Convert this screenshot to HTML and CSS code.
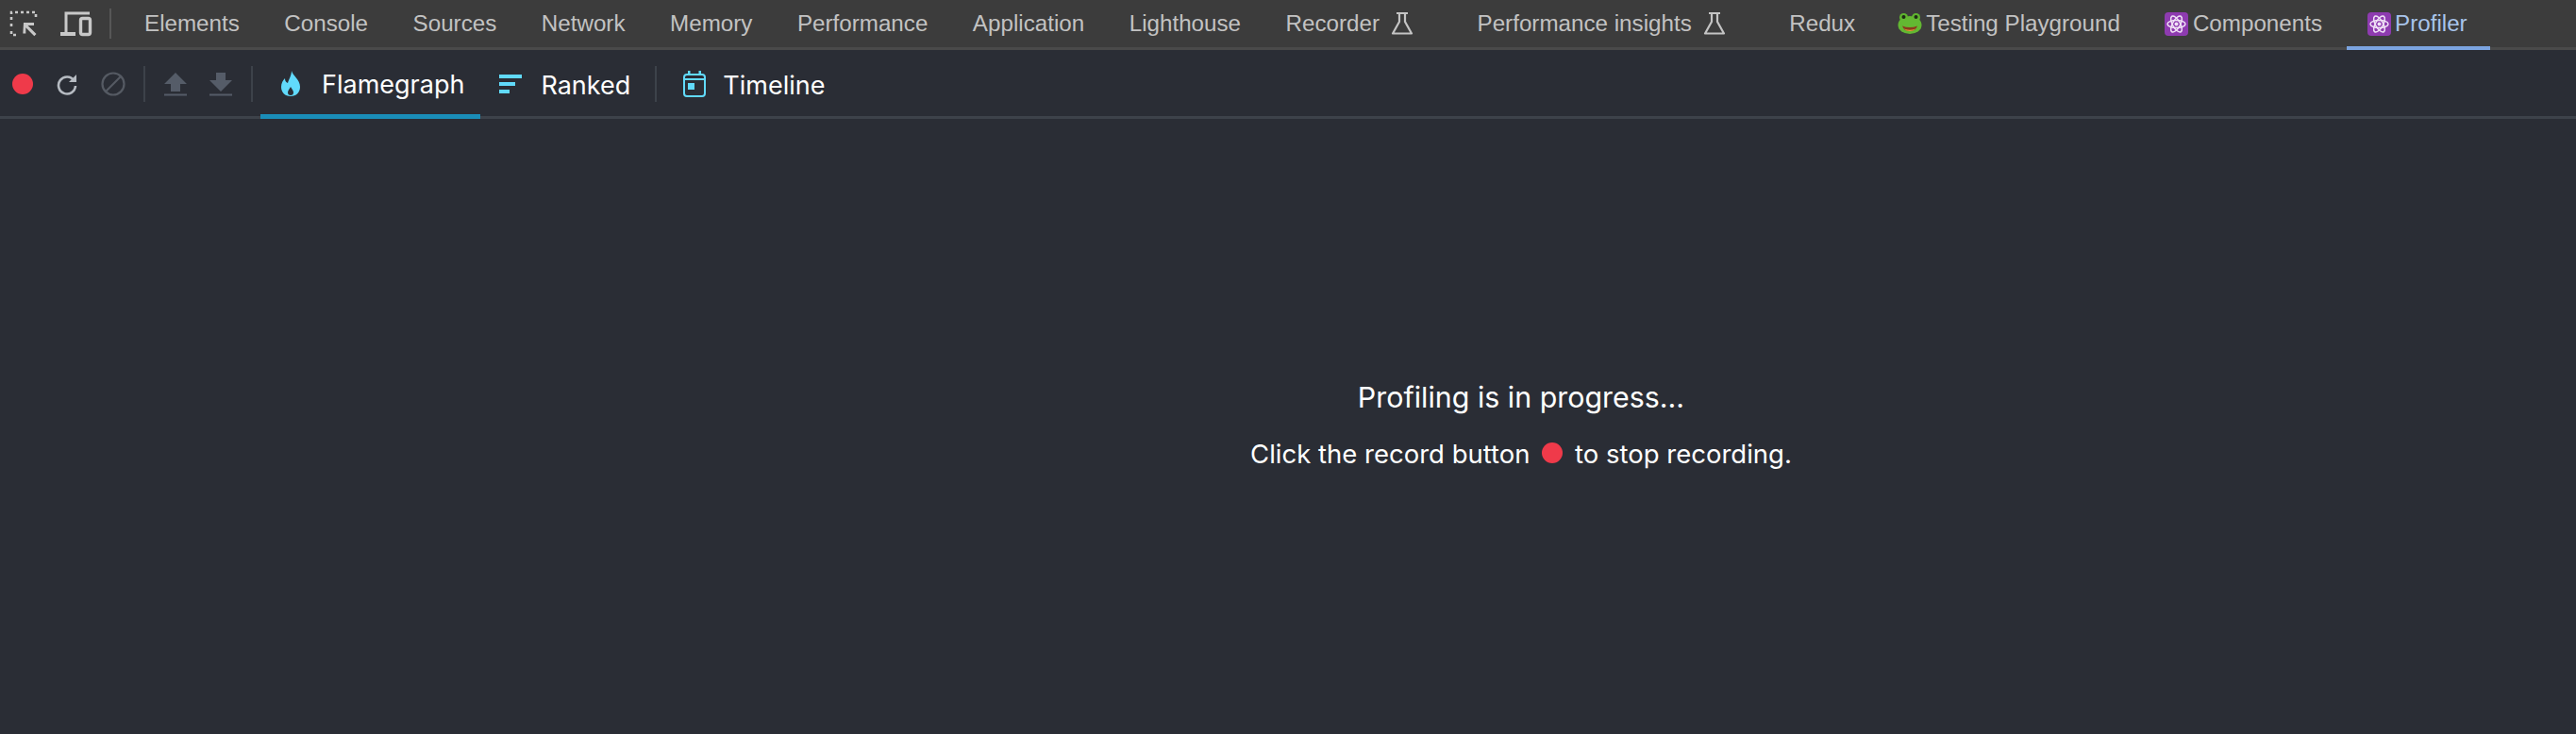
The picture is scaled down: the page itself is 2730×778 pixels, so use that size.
FILE: index.html
```html
<!DOCTYPE html>
<html lang="en">
<head>
    <meta charset="UTF-8">
    <meta name="viewport" content="width=device-width, initial-scale=1.0">
    <title>DevTools - Profiler</title>
    <link rel="stylesheet" href="styles.css">
</head>
<body>

<!-- DevTools main tabs -->
<div class="tabbar">
    <div class="tool-icons">
        <svg class="tool-icon" width="30" height="30" viewBox="0 0 30 30">
            <path d="M2 11V3h26v8M2 15v4M2 23v4h8M14 3h0" fill="none" stroke="#c8c8c8" stroke-width="2.6" stroke-dasharray="3 3"/>
            <path d="M15 14h11v3h-6.500l9 9-2.200 2.200-9-9V25.500h-3z" fill="#c8c8c8"/>
        </svg>
        <svg class="tool-icon" width="34" height="28" viewBox="0 0 34 28">
            <path d="M6 24V3h25" fill="none" stroke="#c8c8c8" stroke-width="3"/>
            <rect x="0" y="23" width="16" height="4" fill="#c8c8c8"/>
            <rect x="21.500" y="8.500" width="10" height="17" rx="2" fill="none" stroke="#c8c8c8" stroke-width="3.400"/>
        </svg>
    </div>
    <div class="tab-sep"></div>
    <div class="tabs">
        <div class="tab">Elements</div>
        <div class="tab">Console</div>
        <div class="tab">Sources</div>
        <div class="tab">Network</div>
        <div class="tab">Memory</div>
        <div class="tab">Performance</div>
        <div class="tab">Application</div>
        <div class="tab">Lighthouse</div>
        <div class="tab tab-flask">Recorder
            <svg width="24" height="26" viewBox="0 0 24 26"><path d="M6 2h12M9 2v9L2 23.500h20L15 11V2" fill="none" stroke="#c4c4c4" stroke-width="2.200" stroke-linejoin="round"/></svg>
        </div>
        <div class="tab tab-flask">Performance insights
            <svg width="24" height="26" viewBox="0 0 24 26"><path d="M6 2h12M9 2v9L2 23.500h20L15 11V2" fill="none" stroke="#c4c4c4" stroke-width="2.200" stroke-linejoin="round"/></svg>
        </div>
        <div class="tab">Redux</div>
        <div class="tab tab-emoji tab-frog">
            <svg width="26" height="26" viewBox="0 0 26 26">
                <circle cx="6.500" cy="6.500" r="4.500" fill="#5fb52f"/>
                <circle cx="19.500" cy="6.500" r="4.500" fill="#5fb52f"/>
                <ellipse cx="13" cy="14.500" rx="12.500" ry="9.500" fill="#63b832"/>
                <circle cx="6.500" cy="6" r="2" fill="#1d2a14"/>
                <circle cx="19.500" cy="6" r="2" fill="#1d2a14"/>
                <path d="M5 15.500q8 3 16 0q-2 5.500-8 5.500t-8-5.500z" fill="#8a3a1c"/>
                <path d="M7 18.500q6 2.500 12 0q-2 2.500-6 2.500t-6-2.500z" fill="#e8a23a"/>
            </svg>
            Testing Playground
        </div>
        <div class="tab tab-emoji">
            <svg width="25" height="25" viewBox="0 0 25 25">
                <rect width="25" height="25" rx="4" fill="#8e3bb0"/>
                <g fill="none" stroke="#f0e2f6" stroke-width="1.500">
                    <ellipse cx="12.500" cy="12.500" rx="9.500" ry="4"/>
                    <ellipse cx="12.500" cy="12.500" rx="9.500" ry="4" transform="rotate(60 12.500 12.500)"/>
                    <ellipse cx="12.500" cy="12.500" rx="9.500" ry="4" transform="rotate(120 12.500 12.500)"/>
                </g>
                <circle cx="12.500" cy="12.500" r="2" fill="#f0e2f6"/>
            </svg>
            Components
        </div>
        <div class="tab tab-emoji tab-active">
            <svg width="25" height="25" viewBox="0 0 25 25">
                <rect width="25" height="25" rx="4" fill="#8e3bb0"/>
                <g fill="none" stroke="#f0e2f6" stroke-width="1.500">
                    <ellipse cx="12.500" cy="12.500" rx="9.500" ry="4"/>
                    <ellipse cx="12.500" cy="12.500" rx="9.500" ry="4" transform="rotate(60 12.500 12.500)"/>
                    <ellipse cx="12.500" cy="12.500" rx="9.500" ry="4" transform="rotate(120 12.500 12.500)"/>
                </g>
                <circle cx="12.500" cy="12.500" r="2" fill="#f0e2f6"/>
            </svg>
            Profiler
        </div>
    </div>
</div>

<!-- Profiler toolbar -->
<div class="toolbar">
    <div class="actions">
        <div class="record-dot"></div>
        <svg class="action" width="24" height="24" viewBox="0 0 24 24">
            <path d="M19.500 8.500A9 9 0 1 0 21 14" fill="none" stroke="#b6bbc2" stroke-width="2.600"/>
            <path d="M14 10L22 2v8z" fill="#b6bbc2"/>
        </svg>
        <svg class="action" width="26" height="26" viewBox="0 0 26 26">
            <circle cx="13" cy="13" r="11.500" fill="none" stroke="#555a63" stroke-width="2.200"/>
            <path d="M5 21L21 5" stroke="#555a63" stroke-width="2.200"/>
        </svg>
    </div>
    <div class="bar-sep"></div>
    <div class="actions actions-file">
        <svg width="24" height="26" viewBox="0 0 24 26">
            <path d="M12 1L24 13H17V21H7V13H0z" fill="#555c68"/>
            <rect y="23.500" width="24" height="2" fill="#555c68"/>
        </svg>
        <svg width="24" height="26" viewBox="0 0 24 26">
            <path d="M12 21L24 9H17V1H7V9H0z" fill="#555c68"/>
            <rect y="23.500" width="24" height="2" fill="#555c68"/>
        </svg>
    </div>
    <div class="bar-sep"></div>
    <div class="view view-active">
        <svg width="20" height="27" viewBox="0 0 20 27">
            <path d="M11 0c1 5 9 9 9 17 0 6-4 10-10 10S0 23 0 17c0-4 2-7 4-9 0 3 1 4 3 5 1-4 4-8 4-13z" fill="#61dafb"/>
            <path d="M10 17c1 2 3 4 3 6 0 2-1 3-3 3s-3-1-3-3c0-2 2-4 3-6z" fill="#2a2d35"/>
        </svg>
        <span class="view-label">Flamegraph</span>
    </div>
    <div class="view view-ranked">
        <svg width="24" height="20" viewBox="0 0 24 20">
            <rect width="24" height="4" fill="#61dafb"/>
            <rect y="8" width="17" height="4" fill="#61dafb"/>
            <rect y="16" width="11" height="4" fill="#61dafb"/>
        </svg>
        <span class="view-label">Ranked</span>
    </div>
    <div class="bar-sep"></div>
    <div class="view view-timeline">
        <svg width="24" height="28" viewBox="0 0 24 28">
            <rect x="1" y="4" width="22" height="23" rx="3" fill="none" stroke="#61dafb" stroke-width="2"/>
            <rect x="1" y="8" width="22" height="2" fill="#61dafb"/>
            <rect x="5" y="0" width="2.500" height="5" fill="#61dafb"/>
            <rect x="16.500" y="0" width="2.500" height="5" fill="#61dafb"/>
            <rect x="5" y="13" width="7" height="7" fill="#61dafb"/>
        </svg>
        <span class="view-label">Timeline</span>
    </div>
</div>

<div class="content">
    <div class="message">Profiling is in progress...</div>
    <div class="message-hint">Click the record button <span class="inline-dot"></span> to stop recording.</div>
</div>

</body>
</html>
```

FILE: styles.css
```css
body {
    margin: 0;
    height: 100vh;
    display: flex;
    flex-direction: column;
    overflow: hidden;
    background-color: #2a2d35;
    color: #fff;
    font-family: Inter, "Liberation Sans", sans-serif;
}

/* top tabs */
.tabbar {
    height: 50px;
    flex: none;
    display: flex;
    align-items: center;
    background-color: #3c3c3c;
    border-bottom: 3px solid #4a4a4a;
    font-family: "Liberation Sans", Arial, sans-serif;
    font-size: 24.2px;
    color: #c2c2c2;
}

.tool-icons {
    display: flex;
    align-items: center;
    gap: 24px;
    padding-left: 10px;
}

.tab-sep {
    width: 2px;
    height: 32px;
    margin: 0 35px 0 18px;
    background-color: #575757;
}

.tabs {
    display: flex;
    height: 100%;
    gap: 47.5px;
}

.tab {
    position: relative;
    display: flex;
    align-items: center;
    white-space: nowrap;
}

.tab-flask {
    gap: 12px;
    margin-right: 20px;
}

.tab-emoji {
    gap: 4.5px;
}

.tab-frog {
    margin-left: -3px;
}

.tab-active {
    color: #a8c4ea;
}

.tab-active::after {
    content: "";
    position: absolute;
    left: -22px;
    right: -24px;
    bottom: -3px;
    height: 4px;
    background-color: #7ba4e0;
}

/* profiler toolbar */
.toolbar {
    box-sizing: border-box;
    height: 73px;
    padding-top: 2px;
    flex: none;
    display: flex;
    align-items: center;
    border-bottom: 3px solid #3d424a;
    font-size: 27px;
}

.actions {
    display: flex;
    align-items: center;
    gap: 24px;
    padding-left: 13px;
}

.record-dot {
    width: 22px;
    height: 22px;
    border-radius: 50%;
    background-color: #ef3a4a;
}

.actions-file {
    padding-left: 20px;
}

.bar-sep {
    width: 2px;
    height: 38px;
    background-color: #3d424a;
}

.actions + .bar-sep {
    margin-left: 19px;
}

.actions-file + .bar-sep {
    margin: 0 8px 0 20px;
}

.view {
    align-self: stretch;
    display: flex;
    align-items: center;
    gap: 23px;
    box-sizing: border-box;
}

.view-label {
    padding-top: 3px;
}

.view-active {
    padding: 0 17px 0 22px;
    border-bottom: 5px solid #1a8db8;
    margin-bottom: -3px;
}

.view-ranked {
    padding: 0 26px 0 20px;
    gap: 20px;
}

.view-timeline {
    padding-left: 28px;
    gap: 18px;
}

/* centre message */
.content {
    flex: 1;
    display: flex;
    flex-direction: column;
    align-items: center;
    justify-content: center;
    gap: 26px;
    padding-left: 494px;
    padding-bottom: 5px;
}

.message {
    font-size: 30.4px;
    line-height: 36px;
}

.message-hint {
    font-size: 27.5px;
    line-height: 32px;
}

.inline-dot {
    display: inline-block;
    width: 22px;
    height: 22px;
    margin: 0 5px;
    border-radius: 50%;
    background-color: #ef3a4a;
}
```
